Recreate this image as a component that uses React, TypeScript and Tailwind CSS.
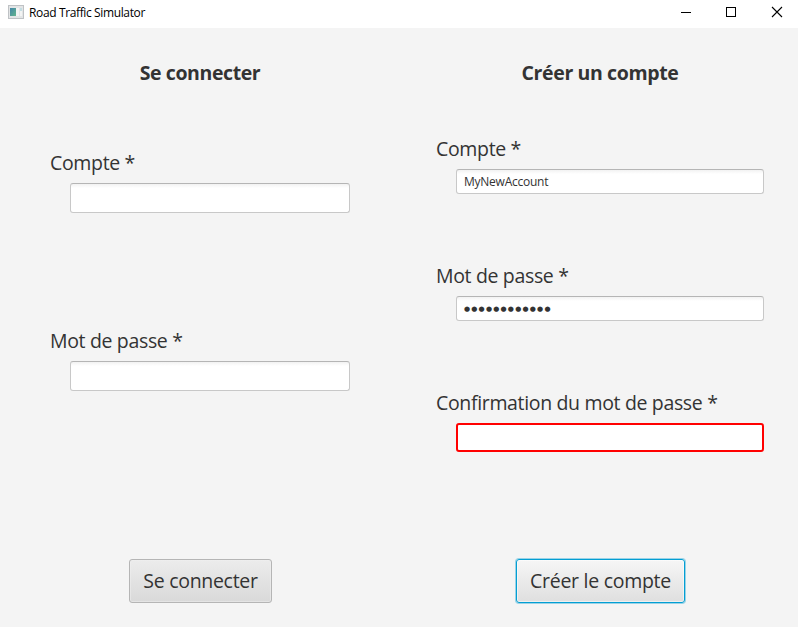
import type { ReactNode } from 'react';

function Label({ children, className = '' }: { children: ReactNode; className?: string }) {
  return (
    <label className={`block h-7 text-[19.5px] leading-7 tracking-[-0.34px] whitespace-nowrap ${className}`}>
      {children}
    </label>
  );
}

const field =
  'ml-5 flex items-center rounded-[3px] border border-[#c8c8c8] border-t-[#b5b5b5] bg-white bg-linear-to-b from-[#f2f2f2] to-white to-[4px] px-[7px] text-[12px]';

function TitleBar() {
  return (
    <header className="flex h-7 items-start justify-between bg-white text-black">
      <div className="flex h-[26px] items-center pl-2">
        <svg className="mb-[2px]" width="16" height="14" viewBox="0 0 16 14" shapeRendering="crispEdges">
          <defs>
            <linearGradient id="pane" x1="0" y1="0" x2="1" y2="1">
              <stop offset="0" stopColor="#4385a7" />
              <stop offset="1" stopColor="#62b58e" />
            </linearGradient>
          </defs>
          <rect x="0.5" y="0.5" width="15" height="13" fill="#e3e5e6" stroke="#bfc2c5" />
          <rect x="2" y="3" width="6" height="8" fill="url(#pane)" />
          <rect x="8" y="3" width="3" height="8" fill="#f3f4f4" />
          <rect x="12" y="3" width="2" height="8" fill="#f3f4f4" />
          <rect x="12" y="3" width="2" height="3" fill="#c3dde3" />
        </svg>
        <span className="ml-[5px] text-[12px] leading-4 tracking-[-0.37px]">Road Traffic Simulator</span>
      </div>
      <div className="flex h-[25px] items-center">
        <svg width="118" height="25" viewBox="0 0 118 25" fill="none" stroke="#000">
          <path d="M1 12.5H11M46.5 7.5H55.5V16.5H46.5Z" shapeRendering="crispEdges" />
          <path d="M92 7L102 17M102 7L92 17" strokeWidth="1.1" />
        </svg>
      </div>
    </header>
  );
}

export default function App() {
  return (
    <div className="flex h-[627px] w-[798px] flex-col bg-[#f4f4f4] font-['Open_Sans','Noto_Sans',sans-serif] text-[#333]">
      <TitleBar />
      <main className="flex flex-1">
        <section className="flex w-[400px] flex-col">
          <h1 className="mt-[31px] h-7 text-center text-[19.5px] leading-7 font-bold tracking-[-0.4px]">
            Se connecter
          </h1>
          <div className="mt-[62px] ml-[50px] w-[300px]">
            <Label>Compte *</Label>
            <div className={`${field} mt-[6px] h-[30px]`} />
            <Label className="mt-[114px]">Mot de passe *</Label>
            <div className={`${field} mt-[6px] h-[30px]`} />
          </div>
          <button className="mt-[168px] ml-[129px] h-[44px] w-[143px] rounded-[3px] border border-[#b5b5b5] bg-linear-to-b from-[#ececec] to-[#d9d9d9] text-[19.5px] leading-7 tracking-[-0.3px] whitespace-nowrap shadow-[inset_0_0_0_1px_#f0f0f080]">
            Se connecter
          </button>
        </section>
        <section className="flex flex-1 flex-col">
          <h1 className="mt-[31px] mr-[-2px] h-7 text-center text-[19.5px] leading-7 font-bold tracking-[-0.38px]">
            Créer un compte
          </h1>
          <div className="mt-[48px] ml-[36px] w-[328px]">
            <Label>Compte *</Label>
            <div className={`${field} mt-[6px] h-[25px]`}>
              <span className="tracking-[-0.25px]">MyNewAccount</span>
            </div>
            <Label className="mt-[68px]">Mot de passe *</Label>
            <div className={`${field} mt-[6px] h-[25px]`}>
              <span className="pt-px font-['DejaVu_Sans',sans-serif] text-[7px] tracking-[1.2px]">●●●●●●●●●●●●</span>
            </div>
            <Label className="mt-[68px]">Confirmation du mot de passe *</Label>
            <div className="mt-[6px] ml-5 h-[29px] rounded-[3px] border-2 border-[#ff0000] bg-white" />
          </div>
          <button className="mt-[107px] ml-[116px] h-[44px] w-[169px] rounded-[3px] border border-[#039ed3] bg-linear-to-b from-[#f6f6f6] to-[#dfdfdf] text-[19.5px] leading-7 tracking-[-0.28px] whitespace-nowrap shadow-[0_0_0_1px_#039ed360,inset_0_0_0_1px_#ffffff80]">
            Créer le compte
          </button>
        </section>
      </main>
    </div>
  );
}
